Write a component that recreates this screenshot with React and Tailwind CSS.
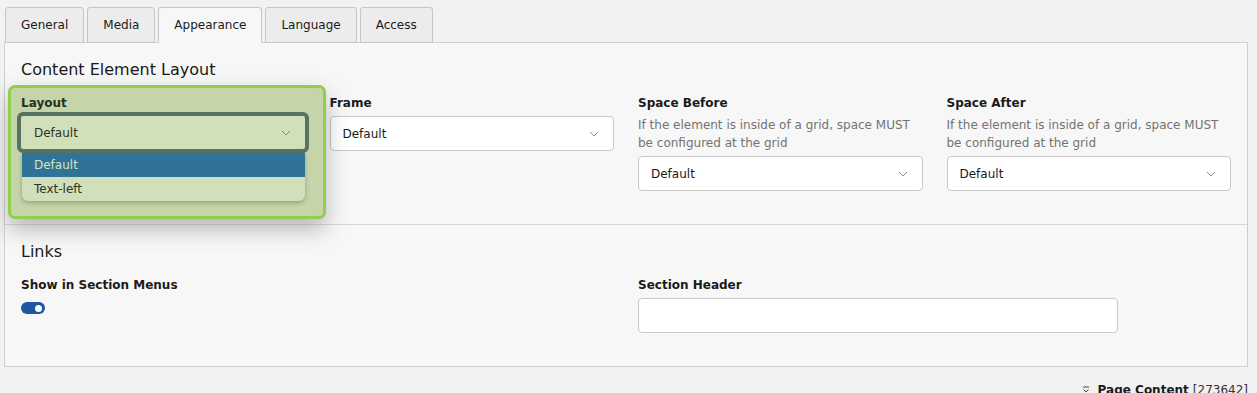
import React from "react";

function Chevron({ className = "" }) {
  return (
    <svg width="10" height="6" viewBox="0 0 10 6" className={className}>
      <path d="M1 1l4 4 4-4" fill="none" stroke="currentColor" strokeWidth="1" />
    </svg>
  );
}

function Select({ value = "Default" }) {
  return (
    <div className="flex h-[35px] items-center justify-between rounded-[4px] border border-[#c8c8c8] bg-white pl-[12px] pr-[14px] text-[12px] text-[#1a1a1a]">
      <span>{value}</span>
      <Chevron className="text-[#8a8a8a]" />
    </div>
  );
}

function Label({ children }) {
  return <div className="h-[14px] text-[12px] font-bold leading-[14px] text-[#1a1a1a]">{children}</div>;
}

const tabs = ["General", "Media", "Appearance", "Language", "Access"];

export default function App() {
  return (
    <div className="min-h-[393px] overflow-hidden bg-[#f2f2f2] pl-[4px] pr-[9px] pt-[7px] font-['DejaVu_Sans',Verdana,sans-serif] text-[12px] text-[#1a1a1a]">
      <div className="relative z-10 flex pl-[1px]">
        {tabs.map((t) => {
          const active = t === "Appearance";
          return (
            <div
              key={t}
              className={
                "mr-[3px] flex h-[36px] items-center rounded-t-[3px] border border-[#c6c6c6] px-[15px] text-[12px] " +
                (active ? "border-b-[#f7f7f7] bg-[#f7f7f7]" : "bg-[#ececec]")
              }
            >
              {t}
            </div>
          );
        })}
      </div>
      <div className="-mt-px border border-[#cfcfcf] bg-[#f7f7f7]">
        <div className="px-[16px] pb-[33px] pt-[17px]">
          <div className="text-[16px] leading-[20px] text-[#1a1a1a]">Content Element Layout</div>
          <div className="mt-[16px] grid grid-cols-4 gap-x-[24px]">
            <div className="relative">
              <Label>Layout</Label>
              <div className="mt-[6px] h-[35px]" />
              <div className="absolute left-[-13px] top-[-11px] z-20 h-[134px] w-[318px] rounded-[7px] border-[3px] border-[#8fcf4c] bg-[#c6d4a9] shadow-[0_10px_22px_rgba(60,60,60,0.35)]">
                <div className="absolute left-[10px] top-[8px] h-[14px] text-[12px] font-bold leading-[14px] text-[#26301a]">Layout</div>
                <div className="absolute left-[6px] top-[24px] flex h-[41px] w-[292px] items-center justify-between rounded-[6px] border-[4px] border-[#587262] bg-[#d2dfbb] pl-[13px] pr-[14px] text-[#2b3520]">
                  <span>Default</span>
                  <Chevron className="text-[#7f8f6e]" />
                </div>
                <div className="absolute left-[11px] top-[65px] w-[283px] overflow-hidden rounded-b-[6px] bg-[#d2dfbb] shadow-[0_2px_4px_rgba(60,70,40,0.35)]">
                  <div className="flex h-[24px] items-center bg-[#2f7399] pl-[12px] text-[#d3e6bd]">Default</div>
                  <div className="flex h-[24px] items-center pl-[12px] text-[#2b3520]">Text-left</div>
                </div>
              </div>
            </div>
            <div>
              <Label>Frame</Label>
              <div className="mt-[6px]">
                <Select />
              </div>
            </div>
            <div>
              <Label>Space Before</Label>
              <div className="mt-[6px] text-[12px] leading-[18px] text-[#737373]">
                If the element is inside of a grid, space MUST be configured at the grid
              </div>
              <div className="mt-[4px]">
                <Select />
              </div>
            </div>
            <div>
              <Label>Space After</Label>
              <div className="mt-[6px] text-[12px] leading-[18px] text-[#737373]">
                If the element is inside of a grid, space MUST be configured at the grid
              </div>
              <div className="mt-[4px]">
                <Select />
              </div>
            </div>
          </div>
        </div>
        <div className="border-t border-[#d8d8d8] px-[16px] pb-[33px] pt-[17px]">
          <div className="text-[16px] leading-[20px] text-[#1a1a1a]">Links</div>
          <div className="mt-[16px] grid grid-cols-2 gap-x-[24px]">
            <div>
              <Label>Show in Section Menus</Label>
              <div className="mt-[10px] flex h-[12px] w-[24px] items-center justify-end rounded-full bg-[#1f56a3] pr-[3px]">
                <div className="h-[7px] w-[7px] rounded-full bg-white" />
              </div>
            </div>
            <div>
              <Label>Section Header</Label>
              <div className="mt-[6px] h-[35px] w-[480px] rounded-[4px] border border-[#c8c8c8] bg-white" />
            </div>
          </div>
        </div>
      </div>
      <div className="mt-[16px] flex items-center justify-end text-[12px] leading-[14px]">
        <svg width="8" height="8" viewBox="0 0 8 8" className="mr-[8px] text-[#444]">
          <path d="M1 1h6M1.5 3.5L4 6l2.5-2.5" fill="none" stroke="currentColor" strokeWidth="1" />
        </svg>
        <span className="font-bold">Page Content</span>
        <span className="ml-[4px] text-[#333]">[273642]</span>
      </div>
    </div>
  );
}
